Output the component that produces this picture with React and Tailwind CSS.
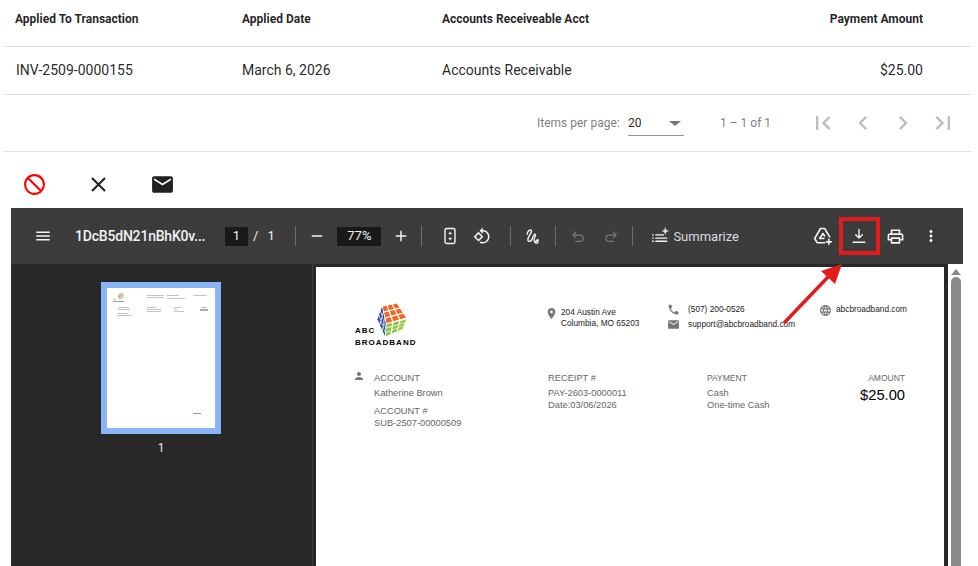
import React from "react";

const Icon = ({ d, className = "", size = 24 }) => (
  <svg width={size} height={size} viewBox="0 0 24 24" fill="currentColor" className={className}>
    <path d={d} />
  </svg>
);

const Line = ({ children, className = "", size = 20, w = 1.7 }) => (
  <svg width={size} height={size} viewBox="0 0 24 24" fill="none" stroke="currentColor" strokeWidth={w} strokeLinecap="round" strokeLinejoin="round" className={className}>
    {children}
  </svg>
);

const paths = {
  block: "M12 2C6.48 2 2 6.48 2 12s4.48 10 10 10 10-4.48 10-10S17.52 2 12 2zM4 12c0-4.42 3.58-8 8-8 1.85 0 3.55.63 4.9 1.69L5.69 16.9C4.63 15.55 4 13.85 4 12zm8 8c-1.85 0-3.55-.63-4.9-1.69L18.31 7.1C19.37 8.45 20 10.15 20 12c0 4.42-3.58 8-8 8z",
  close: "M19 6.41L17.59 5 12 10.59 6.41 5 5 6.41 10.59 12 5 17.59 6.41 19 12 13.41 17.59 19 19 17.59 13.41 12z",
  email: "M20 4H4c-1.1 0-1.99.9-1.99 2L2 18c0 1.1.9 2 2 2h16c1.1 0 2-.9 2-2V6c0-1.1-.9-2-2-2zm0 4l-8 5-8-5V6l8 5 8-5v2z",
  first: "M18.41 16.59L13.82 12l4.59-4.59L17 6l-6 6 6 6zM6 6h2v12H6z",
  prev: "M15.41 7.41L14 6l-6 6 6 6 1.41-1.41L10.83 12z",
  next: "M10 6L8.59 7.41 13.17 12l-4.58 4.59L10 18l6-6z",
  last: "M5.59 7.41L10.18 12l-4.59 4.59L7 18l6-6-6-6zM16 6h2v12h-2z",
  menu: "M3 18h18v-2H3v2zm0-5h18v-2H3v2zm0-7v2h18V6H3z",
  minus: "M19 13H5v-2h14v2z",
  plus: "M19 13h-6v6h-2v-6H5v-2h6V5h2v6h6v2z",
  rotate: "M7.34 6.41L.86 12.9l6.49 6.48 6.49-6.48-6.5-6.49zM3.69 12.9l3.66-3.66L11 12.9l-3.66 3.66-3.65-3.66zm15.67-6.26C17.61 4.88 15.3 4 13 4V.76L8.76 5 13 9.24V6c1.79 0 3.58.68 4.95 2.05 2.73 2.73 2.73 7.17 0 9.9C16.58 19.32 14.79 20 13 20c-.97 0-1.94-.21-2.84-.61l-1.49 1.49C10.02 21.62 11.51 22 13 22c2.3 0 4.61-.88 6.36-2.64 3.52-3.51 3.52-9.21 0-12.72z",
  print: "M19 8h-1V3H6v5H5c-1.66 0-3 1.34-3 3v6h4v4h12v-4h4v-6c0-1.66-1.34-3-3-3zM8 5h8v3H8V5zm8 12v2H8v-4h8v2zm2-2v-2H6v2H4v-4c0-.55.45-1 1-1h14c.55 0 1 .45 1 1v4h-2z",
  more: "M12 8c1.1 0 2-.9 2-2s-.9-2-2-2-2 .9-2 2 .9 2 2 2zm0 2c-1.1 0-2 .9-2 2s.9 2 2 2 2-.9 2-2-.9-2-2-2zm0 6c-1.1 0-2 .9-2 2s.9 2 2 2 2-.9 2-2-.9-2-2-2z",
  place: "M12 2C8.13 2 5 5.13 5 9c0 5.25 7 13 7 13s7-7.75 7-13c0-3.87-3.13-7-7-7zm0 9.5c-1.38 0-2.5-1.12-2.5-2.5s1.12-2.5 2.5-2.5 2.5 1.12 2.5 2.5-1.12 2.5-2.5 2.5z",
  person: "M12 12c2.21 0 4-1.79 4-4s-1.79-4-4-4-4 1.79-4 4 1.79 4 4 4zm0 2c-2.67 0-8 1.34-8 4v2h16v-2c0-2.66-5.33-4-8-4z",
  phone: "M6.62 10.79c1.44 2.83 3.76 5.14 6.59 6.59l2.2-2.2c.27-.27.67-.36 1.02-.24 1.12.37 2.33.57 3.57.57.55 0 1 .45 1 1V20c0 .55-.45 1-1 1-9.39 0-17-7.61-17-17 0-.55.45-1 1-1h3.5c.55 0 1 .45 1 1 0 1.25.2 2.45.57 3.57.11.35.03.74-.25 1.02l-2.2 2.2z",
  globe: "M11.99 2C6.47 2 2 6.48 2 12s4.47 10 9.99 10C17.52 22 22 17.52 22 12S17.52 2 11.99 2zm6.93 6h-2.95c-.32-1.25-.78-2.45-1.38-3.56 1.84.63 3.37 1.91 4.33 3.56zM12 4.04c.83 1.2 1.48 2.53 1.91 3.96h-3.82c.43-1.43 1.08-2.76 1.91-3.96zM4.26 14C4.1 13.36 4 12.69 4 12s.1-1.36.26-2h3.38c-.08.66-.14 1.32-.14 2 0 .68.06 1.34.14 2H4.26zm.82 2h2.95c.32 1.25.78 2.45 1.38 3.56-1.84-.63-3.37-1.9-4.33-3.56zm2.95-8H5.08c.96-1.66 2.49-2.93 4.33-3.56C8.81 5.55 8.35 6.75 8.03 8zM12 19.96c-.83-1.2-1.48-2.53-1.91-3.96h3.82c-.43 1.43-1.08 2.76-1.91 3.96zM14.34 14H9.66c-.09-.66-.16-1.32-.16-2 0-.68.07-1.35.16-2h4.68c.09.65.16 1.32.16 2 0 .68-.07 1.34-.16 2zm.25 5.56c.6-1.11 1.06-2.31 1.38-3.56h2.95c-.96 1.65-2.49 2.93-4.33 3.56zM16.36 14c.08-.66.14-1.32.14-2 0-.68-.06-1.34-.14-2h3.38c.16.64.26 1.31.26 2s-.1 1.36-.26 2h-3.38z",
};

const Sep = ({ className = "" }) => <div className={`h-[20px] w-px bg-[#6f6f6f] ${className}`} />;

const Slot = ({ children, className = "" }) => (
  <div className={`flex h-[32px] w-[32px] shrink-0 items-center justify-center ${className}`}>{children}</div>
);

// bilinear cell polygons for one face of the rubik cube
const lerp = (a, b, t) => [a[0] + (b[0] - a[0]) * t, a[1] + (b[1] - a[1]) * t];
const cells = (tl, tr, br, bl) => {
  const out = [];
  const g = 0.035;
  const pt = (u, v) => lerp(lerp(tl, tr, u), lerp(bl, br, u), v);
  for (let i = 0; i < 3; i++) {
    for (let j = 0; j < 3; j++) {
      const u0 = i / 3 + g, u1 = (i + 1) / 3 - g, v0 = j / 3 + g, v1 = (j + 1) / 3 - g;
      out.push([pt(u0, v0), pt(u1, v0), pt(u1, v1), pt(u0, v1)].map((p) => p.map((n) => n.toFixed(1)).join(",")).join(" "));
    }
  }
  return out;
};

const Cube = ({ className = "" }) => (
  <svg width="30" height="34" viewBox="0 0 30 34" className={className}>
    {cells([5, 3], [20, 0], [30, 15], [9, 21]).map((p) => <polygon key={p} points={p} fill="#f26522" />)}
    {cells([5, 3], [9, 21], [8, 34], [0, 16]).map((p) => <polygon key={p} points={p} fill="#2f4f9f" />)}
    {cells([9, 21], [30, 16], [26, 26], [8, 34]).map((p) => <polygon key={p} points={p} fill="#8cc63f" />)}
  </svg>
);

const Thumb = () => (
  <svg width="108" height="140" viewBox="0 0 108 140" className="block bg-white">
    <g fill="#c4c4c4">
      <rect x="6" y="11" width="3" height="1" />
      <rect x="6" y="13" width="11" height="1" fill="#999" />
      <rect x="40" y="7" width="17" height="1" />
      <rect x="40" y="9" width="17" height="1" />
      <rect x="60" y="7" width="12" height="1" />
      <rect x="60" y="10" width="18" height="1" />
      <rect x="86" y="7" width="14" height="1" />
      <rect x="11" y="19" width="11" height="1" />
      <rect x="11" y="21" width="12" height="1" />
      <rect x="10" y="25" width="11" height="1" />
      <rect x="10" y="27" width="15" height="1" />
      <rect x="40" y="19" width="9" height="1" />
      <rect x="40" y="21" width="14" height="1" />
      <rect x="40" y="23" width="14" height="1" />
      <rect x="67" y="19" width="7" height="1" />
      <rect x="67" y="21" width="3" height="1" />
      <rect x="67" y="23" width="10" height="1" />
      <rect x="94" y="19" width="6" height="1" />
      <rect x="93" y="21" width="8" height="2" fill="#aaa" />
      <rect x="86" y="125" width="8" height="1" fill="#999" />
    </g>
    <svg x="11" y="5" width="6" height="7" viewBox="0 0 30 34" opacity="0.55">
      <polygon points="5,3 20,0 30,15 9,21" fill="#f26522" />
      <polygon points="5,3 9,21 8,34 0,16" fill="#2f4f9f" />
      <polygon points="9,21 30,16 26,26 8,34" fill="#8cc63f" />
    </svg>
  </svg>
);

export default function App() {
  return (
    <div className="relative h-[566px] w-[978px] overflow-hidden bg-white font-['Roboto',sans-serif] text-[#000000de]">
      <div className="ml-[3px] w-[968px]">
        <div className="grid h-[47px] grid-cols-[227px_200px_1fr_auto] items-center border-b border-[#e0e0e0] pb-[9px] pl-3 pr-[48px] text-xs font-bold text-[#000000de]">
          <div>Applied To Transaction</div>
          <div>Applied Date</div>
          <div>Accounts Receiveable Acct</div>
          <div className="text-right">Payment Amount</div>
        </div>
        <div className="grid h-[48px] grid-cols-[226px_200px_1fr_auto] items-center border-b border-[#e0e0e0] pb-[2px] pl-[13px] pr-[48px] text-sm">
          <div>INV-2509-0000155</div>
          <div>March 6, 2026</div>
          <div>Accounts Receivable</div>
          <div className="text-right">$25.00</div>
        </div>
        <div className="flex h-[57px] items-center border-b border-[#e0e0e0] pl-[534px] text-xs text-[#0000008a]">
          <span className="w-[91px]">Items per page:</span>
          <div className="relative flex h-[26px] w-[56px] items-center border-b border-[#0000006b] pt-[1px] text-[#000000de]">
            <span>20</span>
            <div className="ml-[27px] h-0 w-0 border-x-[6px] border-t-[5px] border-x-transparent border-t-[#0000008a]" />
          </div>
          <span className="ml-[36px] w-[53px]">1 – 1 of 1</span>
          <div className="ml-[30px] flex text-[#00000042]">
            {[paths.first, paths.prev, paths.next, paths.last].map((d) => (
              <div key={d} className="flex h-[40px] w-[40px] items-center justify-center">
                <Icon d={d} size={28} />
              </div>
            ))}
          </div>
        </div>
      </div>

      <div className="ml-[14px] flex h-[56px] items-center pt-[8px] text-[#212121]">
        {[
          [paths.block, "-scale-x-100 text-[#ff0000]"],
          [paths.close, ""],
          [paths.email, ""],
        ].map(([d, c]) => (
          <div key={d} className="mr-[24px] flex h-[40px] w-[40px] items-center justify-center">
            <Icon d={d} className={c} size={25} />
          </div>
        ))}
      </div>

      <div className="ml-[11px] h-[358px] w-[952px] bg-[#282828]">
        <div className="flex h-[56px] items-center bg-[#3c3c3c] pl-[16px] text-[#f1f3f4]">
          <Slot><Icon d={paths.menu} size={18} /></Slot>
          <div className="ml-[16px] w-[130px] whitespace-nowrap text-sm font-medium tracking-[-0.2px]">1DcB5dN21nBhK0v...</div>
          <div className="ml-[20px] flex h-[19px] w-[23px] items-center justify-center bg-[#191919] text-[13px]">1</div>
          <span className="ml-[5px] text-[13px]">/</span>
          <span className="ml-[9px] w-[16px] text-[13px]">1</span>
          <Sep className="ml-[12px]" />
          <Slot className="ml-[5px]"><Icon d={paths.minus} size={18} /></Slot>
          <div className="ml-[4px] flex h-[19px] w-[44px] items-center justify-center bg-[#191919] text-[13px]">77%</div>
          <Slot className="ml-[4px]"><Icon d={paths.plus} size={18} /></Slot>
          <Sep className="ml-[4px]" />
          <Slot className="ml-[12px]">
            <Line size={20}>
              <rect x="6" y="3" width="12" height="18" rx="2" />
              <path d="M12 7.5l-1.5 2h3zM12 16.5l-1.5-2h3z" fill="currentColor" strokeWidth="0.8" />
            </Line>
          </Slot>
          <Slot><Icon d={paths.rotate} size={18} /></Slot>
          <Sep className="ml-[12px]" />
          <Slot className="ml-[6px]">
            <Line size={19} w={1.8}>
              <path d="M4 9c0-3 3-6 5-5 3 2-5 8-4 13 1 2 4 1 5-1 1-3 2-7 4-7 2 1-3 7-1 9 1 1 3 0 4-2 1-1 1 3 0 4-1 .5-2 .5-3-.5" />
            </Line>
          </Slot>
          <Sep className="ml-[6px]" />
          <Slot className="ml-[6px] text-[#7a7a7a]">
            <Line size={17}><path d="M8 14L4 10l4-4M4 10h10a4.5 4.5 0 0 1 0 9H8" /></Line>
          </Slot>
          <Slot className="text-[#7a7a7a]">
            <Line size={17}><path d="M16 14l4-4-4-4M20 10H10a4.5 4.5 0 0 0 0 9h6" /></Line>
          </Slot>
          <Sep className="ml-[6px]" />
          <Slot className="ml-[11px]">
            <Line size={19} w={1.6}>
              <path d="M2 10h1M2 14h1M2 18h1M6 10h10M6 14h14M6 18h14" />
              <path d="M18 1l1 3 3 1-3 1-1 3-1-3-3-1 3-1z" fill="currentColor" strokeWidth="0.5" />
            </Line>
          </Slot>
          <span className="ml-[-3px] w-[64px] text-[13px] leading-none text-[#dadce0]">Summarize</span>
          <Slot className="ml-[70px]">
            <Line size={20} w={1.9}>
              <path d="M9 3h5l6 10M9 3l-7 12 3 5h9M8 15l4-6 2 3M8 15h5" />
              <path d="M19 16v6M16 19h6" />
            </Line>
          </Slot>
          <Slot className="ml-[4px]">
            <Line size={20}><path d="M12 4v10M8 10.5l4 4 4-4M5 19.5h14" /></Line>
          </Slot>
          <Slot className="ml-[4px]"><Icon d={paths.print} size={19} /></Slot>
          <Slot className="ml-[4px]"><Icon d={paths.more} size={18} /></Slot>
        </div>

        <div className="flex h-[302px]">
          <div className="w-[302px] shrink-0 border-r border-[#3a3a3a] pl-[90px] pt-[18px]">
            <div className="w-[120px] border-[6px] border-[#8ab4f8]">
              <Thumb />
            </div>
            <div className="mt-[6px] w-[120px] text-center text-xs text-[#e8eaed]">1</div>
          </div>

          <div className="ml-[3px] mt-[3px] h-[299px] w-[628px] shrink-0 bg-white pl-[38px] pt-[36px] font-['Liberation_Sans',sans-serif] text-[8.3px] leading-[12px] text-[#222]">
            <div className="flex h-[45px]">
              <div className="relative w-[191px]">
                <Cube className="ml-[23px]" />
                <div className="absolute left-[1px] top-[22px] text-[8px] font-bold leading-[12px] tracking-[1px] text-black">
                  ABC
                  <br />
                  BROADBAND
                </div>
              </div>
              <div className="flex w-[122px]">
                <Icon d={paths.place} size={13} className="mt-[4px] text-[#757575]" />
                <div className="ml-[3px] pt-[4px] leading-[11px]">
                  204 Austin Ave
                  <br />
                  Columbia, MO 65203
                </div>
              </div>
              <div className="flex w-[152px]">
                <div className="flex flex-col gap-[2px] text-[#757575]">
                  <Icon d={paths.phone} size={13} />
                  <Icon d={paths.email} size={13} />
                </div>
                <div className="ml-[8px] -mt-[1px] leading-[15px]">
                  (507) 200-0526
                  <br />
                  support@abcbroadband.com
                </div>
              </div>
              <div className="flex">
                <Icon d={paths.globe} size={13} className="mt-[1px] text-[#757575]" />
                <div className="ml-[4px] -mt-[1px] leading-[15px]">abcbroadband.com</div>
              </div>
            </div>

            <div className="mt-[24px] flex text-[9.3px] text-[#666]">
              <div className="flex w-[194px]">
                <Icon d={paths.person} size={12} className="-mt-[2px] -ml-[1px] text-[#757575]" />
                <div className="ml-[9px] leading-[12px]">
                  <div>ACCOUNT</div>
                  <div className="mt-[3px]">Katherine Brown</div>
                  <div className="mt-[6px]">ACCOUNT #</div>
                  <div>SUB-2507-00000509</div>
                </div>
              </div>
              <div className="w-[159px] leading-[12px]">
                <div>RECEIPT #</div>
                <div className="mt-[3px]">PAY-2603-0000011</div>
                <div>Date:03/06/2026</div>
              </div>
              <div className="w-[120px] leading-[12px]">
                <div className="text-[8.5px]">PAYMENT</div>
                <div className="mt-[3px]">Cash</div>
                <div>One-time Cash</div>
              </div>
              <div className="w-[78px] text-right leading-[12px]">
                <div className="text-[8.5px]">AMOUNT</div>
                <div className="mt-[3px] text-[14.7px] leading-[16px] text-black">$25.00</div>
              </div>
            </div>
          </div>

          <div className="ml-[4px] flex w-[15px] flex-col items-center bg-white pt-[5px]">
            <div className="h-0 w-0 border-x-[5px] border-b-[6px] border-x-transparent border-b-[#8a8a8a]" />
            <div className="mt-[2px] h-[290px] w-[10px] rounded-t-[5px] bg-[#8a8a8a]" />
          </div>
        </div>
      </div>

      {/* callout drawn over the screenshot */}
      <div className="absolute left-[839px] top-[217px] h-[38px] w-[41px] border-4 border-[#e21b1b]" />
      <svg width="978" height="566" className="pointer-events-none absolute left-0 top-0">
        <path d="M784 323L828 277" stroke="#e21b1b" strokeWidth="3.5" />
        <polygon points="842,264 821,271 835,284" fill="#e21b1b" />
      </svg>
    </div>
  );
}
